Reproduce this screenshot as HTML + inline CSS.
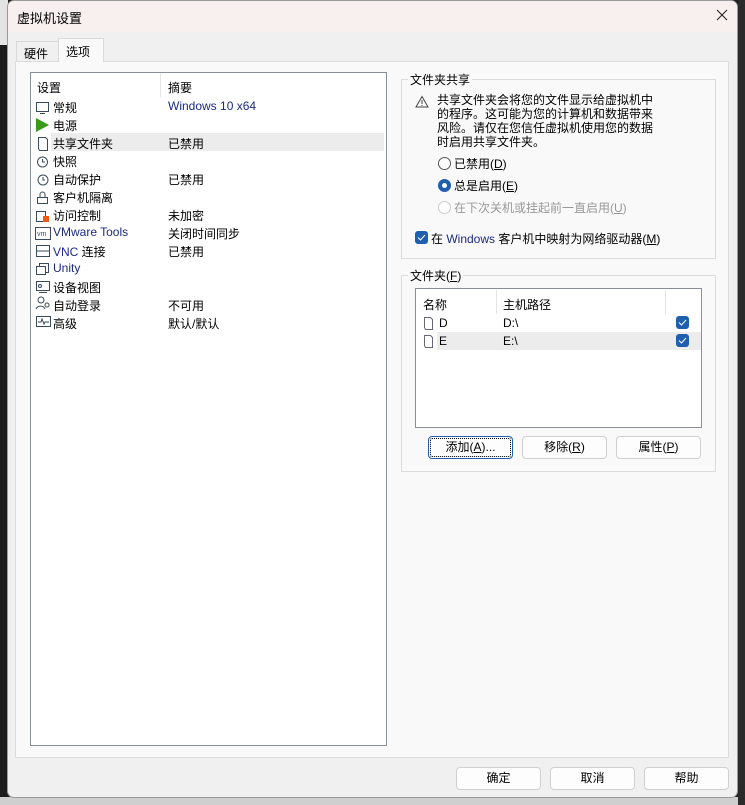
<!DOCTYPE html>
<html><head><meta charset="utf-8"><style>
*{margin:0;padding:0;box-sizing:border-box}
body{width:745px;height:805px;overflow:hidden;background:#1c1c1c;font-family:"Liberation Sans","Noto Sans CJK SC",sans-serif;font-size:12px;color:#000;position:relative}
.a{position:absolute;white-space:nowrap}
.dlg{position:absolute;left:7px;top:0;width:731px;height:798px;background:#f0f0f0;border:1px solid #9a9a9a;border-radius:7px;overflow:hidden}
.btn{position:absolute;height:23px;background:#fdfdfd;border:1px solid #d0d0d0;border-radius:4px;text-align:center;line-height:21px}
.row{position:absolute;left:53px}
.sm{position:absolute;left:168px}
.blue{color:#1a2a80}
.chk{position:absolute;width:13px;height:13px;background:#1f5fae;border-radius:3px}
.rad{position:absolute;width:13px;height:13px;border-radius:50%;border:1px solid #555;background:#fff}
</style></head><body>
<div class="a" style="left:0;top:0;width:8px;height:45px;background:#e4e4e4"></div>
<div class="a" style="left:0;top:797px;width:745px;height:8px;background:#cfcfcf"></div>
<div class="a" style="left:738px;top:0;width:7px;height:805px;background:#2b2b2b"></div>
<div class="dlg">
 <div class="a" style="left:0;top:0;width:731px;height:31px;background:#f8f0ee"></div>
 <div class="a" style="left:9px;top:7px;font-size:13px">虚拟机设置</div>
 <svg class="a" style="left:708px;top:8px" width="12" height="12" stroke="#222" stroke-width="1.1"><path d="M1 1L11 11M11 1L1 11"/></svg>
 <div class="a" style="left:8px;top:40px;width:43px;height:21px;border:1px solid #d9d9d9;border-bottom:none;background:#f0f0f0;padding:3px 0 0 7px">硬件</div>
 <div class="a" style="left:50px;top:37px;width:46px;height:24px;border:1px solid #d9d9d9;border-bottom:none;background:#f9f9f9;padding:4px 0 0 7px;z-index:2">选项</div>
 <div class="a" style="left:7px;top:60px;width:714px;height:697px;background:#f9f9f9;border:1px solid #dcdcdc"></div>
 <div class="a" style="left:22px;top:71px;width:357px;height:674px;background:#fff;border:1px solid #8a8f96"></div>
</div>
<div class="a" style="left:160px;top:73px;width:1px;height:24px;background:#e4e4e4"></div>
<div class="a" style="left:37px;top:79px">设置</div>
<div class="a" style="left:168px;top:79px">摘要</div>
<div class="a" style="left:51px;top:133px;width:333px;height:18px;background:#ececec"></div>
<div class="row a" style="top:99px">常规</div><div class="sm blue" style="top:99px">Windows 10 x64</div>
<div class="row a" style="top:117px">电源</div>
<div class="row a" style="top:135px">共享文件夹</div><div class="sm" style="top:135px">已禁用</div>
<div class="row a" style="top:153px">快照</div>
<div class="row a" style="top:171px">自动保护</div><div class="sm" style="top:171px">已禁用</div>
<div class="row a" style="top:189px">客户机隔离</div>
<div class="row a" style="top:207px">访问控制</div><div class="sm" style="top:207px">未加密</div>
<div class="row a blue" style="top:225px">VMware Tools</div><div class="sm" style="top:225px">关闭时间同步</div>
<div class="row a" style="top:243px"><span class="blue">VNC</span> 连接</div><div class="sm" style="top:243px">已禁用</div>
<div class="row a blue" style="top:261px">Unity</div>
<div class="row a" style="top:279px">设备视图</div>
<div class="row a" style="top:297px">自动登录</div><div class="sm" style="top:297px">不可用</div>
<div class="row a" style="top:315px">高级</div><div class="sm" style="top:315px">默认/默认</div>
<svg class="a" style="left:35px;top:99px" width="18" height="240" fill="none" stroke="#3a4a5a" stroke-width="1">
 <rect x="1.5" y="3.5" width="12" height="9"/><line x1="5" y1="14.5" x2="10" y2="14.5"/>
 <polygon points="1,19 14,26 1,33" fill="#3a9a1a" stroke="none"/>
 <path d="M3.5 38.5h7l2 2v11h-8l-1-2z"/>
 <circle cx="7.5" cy="63" r="5"/><path d="M7.5 60v3h2.5"/>
 <circle cx="8" cy="81" r="5"/><path d="M8 78v3h2"/>
 <rect x="2.5" y="98.5" width="10" height="6"/><path d="M5 98.5v-3a2.5 2.5 0 0 1 5 0v3"/>
 <rect x="1.5" y="112.5" width="9" height="10"/><rect x="8" y="117" width="6" height="6" fill="#f05a14" stroke="none"/>
 <rect x="0.5" y="128.5" width="15" height="12"/><text x="2" y="137" font-size="7" fill="#3a4a5a" stroke="none" font-family="Liberation Sans">vm</text>
 <rect x="1.5" y="146.5" width="13" height="11"/><line x1="1.5" y1="152" x2="14.5" y2="152"/>
 <rect x="1.5" y="167.5" width="9" height="8"/><path d="M4.5 167.5v-3h9v9h-3"/>
 <rect x="1.5" y="182.5" width="13" height="9"/><circle cx="5" cy="187" r="1.5"/><line x1="4" y1="193.5" x2="12" y2="193.5"/>
 <circle cx="6" cy="201" r="3"/><path d="M1 210a5 5 0 0 1 9 0"/><circle cx="12" cy="206" r="2"/>
 <rect x="1.5" y="217.5" width="14" height="10"/><path d="M3 223h3l1-3 2 5 1-2h4"/>
</svg>
<div class="a" style="left:401px;top:79px;width:315px;height:180px;border:1px solid #dcdcdc"></div>
<div class="a" style="left:408px;top:71px;background:#f9f9f9;padding:0 2px">文件夹共享</div>
<svg class="a" style="left:415px;top:95px" width="14" height="13" fill="none" stroke="#444"><path d="M7 1.5L13 12H1z"/><path d="M7 5v4M7 10v1"/></svg>
<div class="a" style="left:437px;top:93px;line-height:14px">共享文件夹会将您的文件显示给虚拟机中<br>的程序。这可能为您的计算机和数据带来<br>风险。请仅在您信任虚拟机使用您的数据<br>时启用共享文件夹。</div>
<div class="rad" style="left:438px;top:157px"></div><div class="a" style="left:454px;top:155px">已禁用(<u>D</u>)</div>
<div class="rad" style="left:438px;top:179px;border:4px solid #1f5fae"></div><div class="a" style="left:454px;top:177px">总是启用(<u>E</u>)</div>
<div class="rad" style="left:438px;top:201px;border-color:#ccc"></div><div class="a" style="left:454px;top:199px;color:#999">在下次关机或挂起前一直启用(<u>U</u>)</div>
<svg class="a" style="left:415px;top:231px" width="13" height="13"><rect width="13" height="13" rx="3" fill="#1f5fae"/><path d="M3 6.5l2.5 2.5 4.5-5" stroke="#fff" fill="none"/></svg>
<div class="a" style="left:431px;top:230px">在 <span class="blue">Windows</span> 客户机中映射为网络驱动器(<u>M</u>)</div>
<div class="a" style="left:401px;top:275px;width:315px;height:197px;border:1px solid #dcdcdc"></div>
<div class="a" style="left:408px;top:267px;background:#f9f9f9;padding:0 2px">文件夹(<u>F</u>)</div>
<div class="a" style="left:415px;top:288px;width:287px;height:140px;background:#fff;border:1px solid #8a8f96"></div>
<div class="a" style="left:496px;top:290px;width:1px;height:24px;background:#e4e4e4"></div>
<div class="a" style="left:665px;top:290px;width:1px;height:24px;background:#e4e4e4"></div>
<div class="a" style="left:423px;top:296px">名称</div><div class="a" style="left:503px;top:296px">主机路径</div>
<div class="a" style="left:437px;top:332px;width:264px;height:18px;background:#ececec"></div>
<svg class="a" style="left:423px;top:316px" width="12" height="34" fill="none" stroke="#667"><path d="M1.5 1.5h6l2 2v10h-7l-1-2z"/><path d="M1.5 19.5h6l2 2v10h-7l-1-2z"/></svg>
<div class="a" style="left:439px;top:316px">D</div><div class="a" style="left:503px;top:316px">D:\</div>
<div class="a" style="left:439px;top:334px">E</div><div class="a" style="left:503px;top:334px">E:\</div>
<svg class="a" style="left:676px;top:316px" width="13" height="31"><rect width="13" height="13" rx="3" fill="#1f5fae"/><rect y="18" width="13" height="13" rx="3" fill="#1f5fae"/><path d="M3 6.5l2.5 2.5 4.5-5M3 24.5l2.5 2.5 4.5-5" stroke="#fff" fill="none"/></svg>
<div class="btn" style="left:428px;top:436px;width:85px;border:1px solid #1f5fae;outline:1px dotted #000;outline-offset:-3px">添加(<u>A</u>)...</div>
<div class="btn" style="left:522px;top:436px;width:85px">移除(<u>R</u>)</div>
<div class="btn" style="left:616px;top:436px;width:85px">属性(<u>P</u>)</div>
<div class="btn" style="left:456px;top:767px;width:85px">确定</div>
<div class="btn" style="left:550px;top:767px;width:85px">取消</div>
<div class="btn" style="left:644px;top:767px;width:85px">帮助</div>
</body></html>
